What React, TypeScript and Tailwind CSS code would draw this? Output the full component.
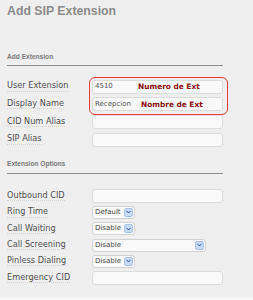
import React from "react";

const labelCls =
  "text-[8.2px] text-[#505050] leading-none border-b border-dotted border-[#d2d2d2] pb-[1px]";

function Row({ label, children, h = "h-[14px]" }: { label: string; children: React.ReactNode; h?: string }) {
  return (
    <div className={`flex items-center ${h} leading-none`}>
      <div className="w-[85px] shrink-0 leading-none flex">
        <span className={labelCls}>{label}</span>
      </div>
      {children}
    </div>
  );
}

function TextBox({ children }: { children?: React.ReactNode }) {
  return (
    <div className="w-[131px] h-[14px] rounded-[3px] border border-[#dcdcdc] bg-[#f9f9f9] flex items-center pl-[2px] text-[7px] leading-none text-[#555] whitespace-nowrap">
      {children}
    </div>
  );
}

function Select({ value, w }: { value: string; w: string }) {
  return (
    <div className={`${w} h-[13px] rounded-[3px] border border-[#d4d4d4] bg-[#fbfbfb] flex items-center justify-between pl-[2px] pr-[1px] text-[7px] leading-none text-[#444]`}>
      <span>{value}</span>
      <span className="w-[9px] h-[9px] rounded-[2px] bg-[#c9daf5] border border-[#aac3ea] flex items-center justify-center">
        <svg width="5" height="4" viewBox="0 0 5 4">
          <path d="M0.5 0.8 L2.5 3 L4.5 0.8" stroke="#2c54a8" strokeWidth="1" fill="none" />
        </svg>
      </span>
    </div>
  );
}

function Section({ title, pb }: { title: string; pb: string }) {
  return (
    <div className={`w-[216px] border-b-[1.5px] border-[#8f8f8f] ${pb} leading-none flex`}>
      <span className="text-[6.6px] font-bold text-[#7a7a7a] leading-none" style={{ fontFamily: '"Liberation Sans", Arial, sans-serif' }}>
        {title}
      </span>
    </div>
  );
}

export default function App() {
  return (
    <div
      className="w-[253px] h-[300px] bg-[#efefef] flex flex-col overflow-hidden text-[8px] leading-none"
      style={{ fontFamily: '"DejaVu Sans", Verdana, sans-serif' }}
    >
      <div className="flex-1 pl-[7px] pt-[4px]">
        <h1
          className="text-[12.3px] font-bold text-[#8a8a8a] leading-[14px]"
          style={{ fontFamily: '"Liberation Sans", Arial, sans-serif' }}
        >
          Add SIP Extension
        </h1>

        <div className="mt-[36px]">
          <Section title="Add Extension" pb="pb-[4px]" />
        </div>

        <div className="relative mt-[14px] flex flex-col gap-[3.67px]">
          <div className="absolute left-[82px] top-[-3px] w-[139px] h-[38px] rounded-[6px] border-[1.5px] border-[#ee3b3b] pointer-events-none" />
          <Row label="User Extension">
            <TextBox>
              <span className="w-[43px]">4510</span>
              <span className="text-[7.4px] font-bold text-[#8b0d0d]">Numero de Ext</span>
            </TextBox>
          </Row>
          <Row label="Display Name">
            <TextBox>
              <span className="w-[46px]">Recepcion</span>
              <span className="text-[7.4px] font-bold text-[#8b0d0d]">Nombre de Ext</span>
            </TextBox>
          </Row>
          <Row label="CID Num Alias">
            <TextBox />
          </Row>
          <Row label="SIP Alias">
            <TextBox />
          </Row>
        </div>

        <div className="mt-[14px]">
          <Section title="Extension Options" pb="pb-[6px]" />
        </div>

        <div className="mt-[15px] flex flex-col gap-[2.3px]">
          <Row label="Outbound CID">
            <TextBox />
          </Row>
          <Row label="Ring Time">
            <Select value="Default" w="w-[43px]" />
          </Row>
          <Row label="Call Waiting">
            <Select value="Disable" w="w-[43px]" />
          </Row>
          <Row label="Call Screening">
            <Select value="Disable" w="w-[114px]" />
          </Row>
          <Row label="Pinless Dialing">
            <Select value="Disable" w="w-[43px]" />
          </Row>
          <Row label="Emergency CID" h="h-[15px]">
            <TextBox />
          </Row>
        </div>
      </div>
      <div className="h-[2px] bg-[#f8f8f8]" />
    </div>
  );
}
